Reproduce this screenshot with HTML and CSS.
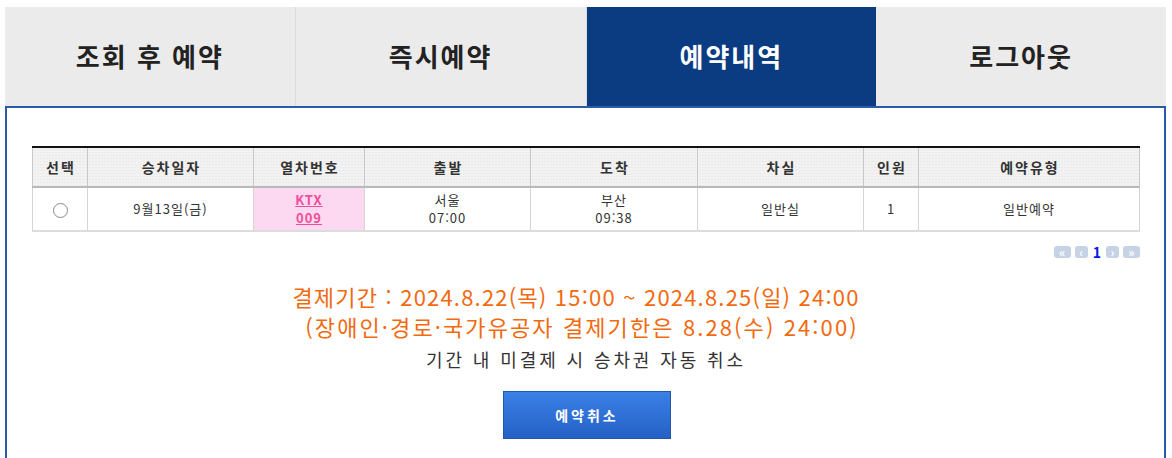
FILE: index.html
```html
<!DOCTYPE html>
<html lang="ko">
<head>
<meta charset="utf-8">
<link rel="stylesheet" href="styles.css">
</head>
<body>
<div class="wrap">
  <div class="tabs">
    <div class="tab">조회 후 예약</div>
    <div class="tab">즉시예약</div>
    <div class="tab active">예약내역</div>
    <div class="tab">로그아웃</div>
  </div>
  <div class="panel">
    <table class="list">
      <thead>
        <tr>
          <th class="c1">선택</th>
          <th class="c2">승차일자</th>
          <th class="c3">열차번호</th>
          <th class="c4">출발</th>
          <th class="c5">도착</th>
          <th class="c4">차실</th>
          <th class="c1">인원</th>
          <th>예약유형</th>
        </tr>
      </thead>
      <tbody>
        <tr>
          <td><span class="radio"></span></td>
          <td>9월13일(금)</td>
          <td class="train"><a href="#">KTX<br>009</a></td>
          <td>서울<br>07:00</td>
          <td>부산<br>09:38</td>
          <td>일반실</td>
          <td>1</td>
          <td>일반예약</td>
        </tr>
      </tbody>
    </table>
    <div class="pager">
      <span class="pbtn">&laquo;</span><span class="pbtn sm">&lsaquo;</span><span class="pnum">1</span><span class="pbtn sm">&rsaquo;</span><span class="pbtn">&raquo;</span>
    </div>
    <div class="notice">
      <p class="orange first">결제기간 : 2024.8.22(목) 15:00 ~ 2024.8.25(일) 24:00</p>
      <p class="orange second">(장애인·경로·국가유공자 결제기한은 8.28(수) 24:00)</p>
      <p class="gray">기간 내 미결제 시 승차권 자동 취소</p>
    </div>
    <div class="btnrow"><button class="cancel">예약취소</button></div>
  </div>
</div>
</body>
</html>
```

FILE: styles.css
```css
html, body {
  margin: 0;
  padding: 0;
  background: #fff;
}
body {
  font-family: "Noto Sans CJK KR", "Noto Sans", "DejaVu Sans", sans-serif;
  color: #333;
}
.wrap {
  padding: 7px 6px 0 5px;
}
.tabs {
  display: flex;
  height: 99px;
}
.tab {
  flex: 1;
  display: flex;
  align-items: center;
  justify-content: center;
  padding-bottom: 3px;
  background: #ebebeb;
  border-right: 1px solid #dcdcdc;
  font-size: 26px;
  font-weight: bold;
  color: #222;
  letter-spacing: 2px;
}
.tab:last-child {
  border-right: none;
}
.tab.active {
  background: #0b3b81;
  color: #fff;
  border-right: none;
}
.panel {
  border: 2px solid #2b5aa6;
  border-bottom: none;
  padding: 38px 24px 30px 25px;
  height: 400px;
}
.list {
  width: 100%;
  table-layout: fixed;
  border-collapse: collapse;
  border-top: 2px solid #111;
}
.list th {
  height: 38px;
  background-color: #f2f2f2;
  background-image: radial-gradient(#e2e2e2 0.6px, transparent 0.8px);
  background-size: 3px 3px;
  border: 1px solid #c8c8c8;
  border-top: none;
  border-bottom: 2px solid #b9b9b9;
  font-size: 14px;
  font-weight: bold;
  color: #333;
  letter-spacing: 2px;
  padding: 0 0 0 2px;
}
.list td {
  height: 42px;
  border: 1px solid #d4d4d4;
  border-bottom: 2px solid #dcdcdc;
  text-align: center;
  color: #333;
  font-size: 13px;
  letter-spacing: 1px;
  line-height: 18px;
  padding: 0;
}
.c1 { width: 52px; }
.c2 { width: 163px; }
.c3 { width: 108px; }
.c4 { width: 163px; }
.c5 { width: 164px; }
.radio {
  display: inline-block;
  width: 13px;
  height: 13px;
  border: 1px solid #888;
  border-radius: 50%;
  background: #fff;
  vertical-align: middle;
}
.list td.train {
  background: #fcd9f1;
}
.train a {
  color: #ee4f9a;
  font-weight: bold;
  text-decoration: underline;
  letter-spacing: 1px;
}
.pager {
  display: flex;
  justify-content: flex-end;
  align-items: center;
  gap: 4px;
  margin-top: 13px;
  height: 14px;
}
.pbtn {
  display: inline-flex;
  align-items: center;
  justify-content: center;
  width: 17px;
  height: 12px;
  border-radius: 3px;
  background: #c6d3e6;
  color: #fff;
  font-size: 12px;
  font-weight: bold;
  line-height: 12px;
}
.pbtn.sm {
  width: 13px;
}
.pnum {
  color: #0019e6;
  font-weight: bold;
  font-size: 14px;
  line-height: 14px;
  margin: 0 1px;
}
.notice {
  margin-top: 22px;
  text-align: center;
}
.notice p {
  margin: 0;
}
.orange {
  color: #f26a10;
  font-size: 22px;
  line-height: 30px;
}
.orange.first {
  letter-spacing: 1.2px;
  padding-right: 20px;
}
.orange.second {
  letter-spacing: 2.1px;
  padding-right: 8px;
}
.gray {
  color: #333;
  font-size: 18px;
  letter-spacing: 2.9px;
  line-height: 36px;
}
.btnrow {
  display: flex;
  justify-content: center;
  margin-top: 14px;
}
.cancel {
  width: 168px;
  height: 48px;
  border: 1px solid #2457a8;
  background: linear-gradient(#3a80e6, #2561c6);
  color: #fff;
  font-family: "Noto Sans CJK KR", sans-serif;
  font-size: 14px;
  font-weight: bold;
  letter-spacing: 3px;
  margin-left: 2px;
}
```
